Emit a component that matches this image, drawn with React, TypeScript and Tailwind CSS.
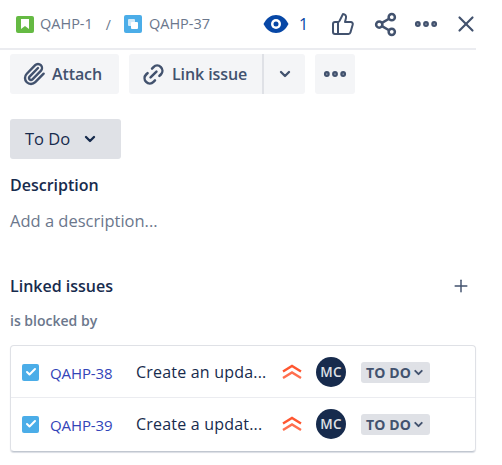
import { Link2, Paperclip, Plus, Share2, ThumbsUp, X, MoreHorizontal, ChevronDown, Check } from 'lucide-react'

const issues = [
  { key: 'QAHP-38', summary: 'Create an upda...' },
  { key: 'QAHP-39', summary: 'Create a updat...' },
]

const PriorityIcon = () => (
  <svg width="20" height="16" viewBox="0 0 20 16" fill="none" stroke="#ff5630" strokeWidth="2.4">
    <path d="M1 7.5 10 2l9 5.5" />
    <path d="M1 14 10 8.5l9 5.5" strokeOpacity="0.85" />
  </svg>
)

const IssueRow = ({ issueKey, summary, last }: { issueKey: string; summary: string; last?: boolean }) => (
  <div className={`flex items-center pl-[11px] ${last ? 'h-[53px] pb-[1px]' : 'h-[52px] border-b border-[#ebecf0] pt-[1px]'}`}>
    <div className="flex h-[17px] w-[17px] items-center justify-center rounded-[2px] bg-[#4bade8]">
      <Check className="h-3 w-3 text-white" strokeWidth={4} />
    </div>
    <span className="ml-[11px] mt-[2px] w-[86px] text-[15px] tracking-[-0.1px] text-[#3244b8]">{issueKey}</span>
    <span className="w-[146px] whitespace-nowrap text-[16px] tracking-[0.2px] text-[#172b4d]">{summary}</span>
    <PriorityIcon />
    <div className="ml-[14px] flex h-[30px] w-[30px] items-center justify-center rounded-full bg-[#172b4d] text-[13.5px] font-semibold tracking-wide text-[#dfe1e6]">
      MC
    </div>
    <div className="ml-[15px] flex h-[21px] w-[69px] items-center justify-center gap-[1px] rounded-[3px] bg-[#dfe1e6] text-[14px] font-bold tracking-[0.1px] whitespace-nowrap text-[#42526e]">
      TO DO
      <ChevronDown className="h-[13px] w-[13px]" strokeWidth={3.5} />
    </div>
  </div>
)

export default function App() {
  return (
    <div className="h-[465px] w-[502px] overflow-hidden bg-white font-['Open_Sans','Noto_Sans',sans-serif] text-[#172b4d]">
      <div className="w-[476px]">
        <div className="flex h-[50px] items-center border-b-[2px] border-[#ebecf0] pl-4 whitespace-nowrap text-[#6b778c] [&>*]:shrink-0">
          <div className="flex h-[17px] w-[18px] items-center justify-center rounded-[2px] bg-[#65ba43]">
            <svg width="8" height="10" viewBox="0 0 8 10"><path d="M0 0h8v10L4 7 0 10z" fill="#fff" /></svg>
          </div>
          <span className="ml-[6px] text-[14.5px]">QAHP-1</span>
          <span className="ml-[13px] text-[14px]">/</span>
          <div className="ml-[13px] flex h-[18px] w-[18px] items-center justify-center rounded-[2px] bg-[#4bade8]">
            <svg width="12" height="12" viewBox="0 0 12 12">
              <rect x="1" y="1" width="7" height="7" rx="1" fill="#fff" fillOpacity="0.75" />
              <rect x="4" y="4" width="7" height="7" rx="1" fill="#fff" />
            </svg>
          </div>
          <span className="ml-[7px] text-[14.5px]">QAHP-37</span>
          <svg className="ml-[53px]" width="26" height="20" viewBox="0 0 26 20">
            <path d="M0.5 10C3.5 4 8 1 13 1s9.500 3 12.500 9c-3 6-7.500 9-12.500 9S3.500 16 .5 10z" fill="#0747a6" />
            <circle cx="13" cy="10" r="5" fill="#fff" />
            <circle cx="13" cy="10" r="2.500" fill="#0747a6" />
          </svg>
          <span className="ml-[10px] text-[16px] text-[#0747a6]">1</span>
          <ThumbsUp className="ml-[23px] h-[24px] w-[24px] text-[#42526e]" strokeWidth={2} />
          <Share2 className="ml-[18px] h-[25px] w-[25px] text-[#42526e]" strokeWidth={2.4} />
          <MoreHorizontal className="ml-[14px] h-[28px] w-[28px] text-[#42526e]" strokeWidth={3} />
          <X className="ml-[13px] h-[26px] w-[26px] text-[#42526e]" strokeWidth={2} />
        </div>

        <div className="px-[10px]">
          <div className="mt-[4px] flex h-[40px] gap-[10px] text-[16px] font-semibold text-[#42526e]">
            <button className="flex w-[109px] items-center gap-[6px] rounded-[3px] bg-[#f4f5f7] pl-[12px] tracking-[-0.1px]">
              <Paperclip className="h-[24px] w-[24px]" strokeWidth={2.4} />
              Attach
            </button>
            <div className="flex w-[176px] rounded-[3px] bg-[#f4f5f7]">
              <button className="flex w-[135px] items-center gap-[6px] border-r-[2px] border-[#dfe1e6] pl-[12px] tracking-[-0.1px] whitespace-nowrap">
                <Link2 className="h-[25px] w-[25px] -rotate-45" strokeWidth={2.4} />
                Link issue
              </button>
              <button className="flex flex-1 items-center justify-center">
                <ChevronDown className="h-[16px] w-[16px]" strokeWidth={3.5} />
              </button>
            </div>
            <button className="flex w-[40px] items-center justify-center rounded-[3px] bg-[#f4f5f7]">
              <MoreHorizontal className="h-[28px] w-[28px]" strokeWidth={3} />
            </button>
          </div>

          <button className="mt-[25px] flex h-[40px] w-[111px] items-center rounded-[3px] bg-[#dfe1e6] pl-[15px] text-[16.5px] font-medium">
            To Do
            <ChevronDown className="ml-[12px] h-[16px] w-[16px]" strokeWidth={3.5} />
          </button>

          <h2 className="mt-[15px] text-[16px] leading-[22px] font-semibold">Description</h2>
          <p className="mt-[14px] text-[16.5px] leading-[22px] text-[#6b778c]">Add a description...</p>

          <div className="mt-[42px] flex h-[24px] items-center justify-between">
            <h2 className="text-[16px] font-semibold">Linked issues</h2>
            <Plus className="mr-[-5px] h-[20px] w-[20px] text-[#42526e]" strokeWidth={1.75} />
          </div>
          <p className="mt-[14px] text-[14px] leading-[18px] font-semibold text-[#6b778c]">is blocked by</p>

          <div className="mt-[15px] w-[466px] rounded-[4px] border border-[#dfe1e6] border-b-[#c1c7d0] shadow-[0_1px_1px_rgba(9,30,66,0.15)]">
            {issues.map((issue, i) => (
              <IssueRow key={issue.key} issueKey={issue.key} summary={issue.summary} last={i === issues.length - 1} />
            ))}
          </div>
        </div>
      </div>
    </div>
  )
}
